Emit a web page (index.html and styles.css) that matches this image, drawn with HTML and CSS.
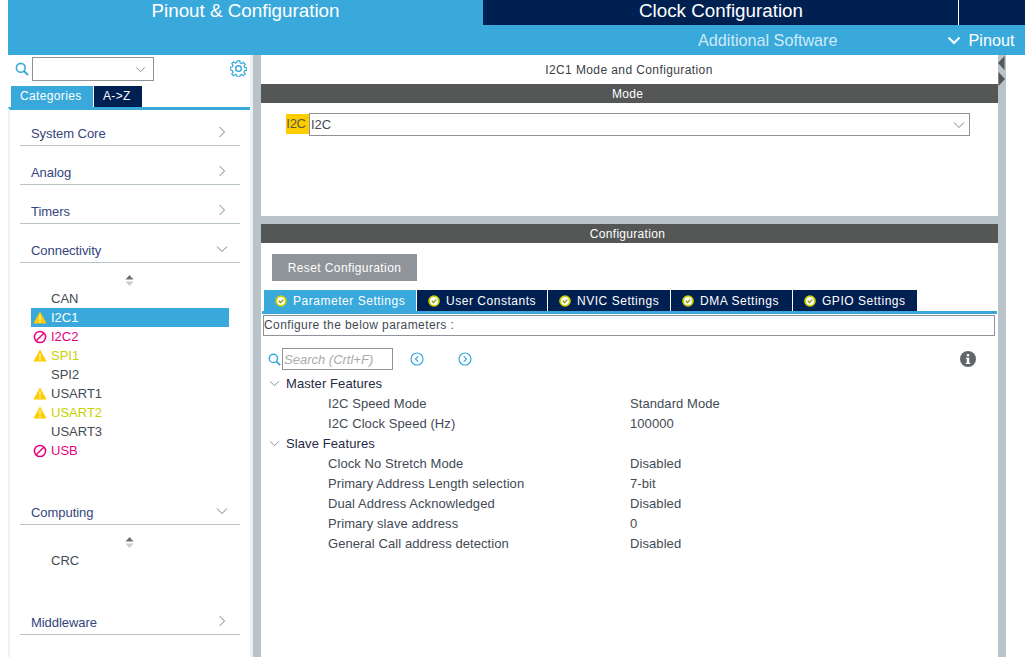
FILE: index.html
```html
<!DOCTYPE html>
<html lang="en">
<head>
<meta charset="utf-8">
<title>Pinout &amp; Configuration</title>
<link rel="stylesheet" href="styles.css">
</head>
<body>
<svg width="0" height="0" class="defs">
  <defs>
    <symbol id="warn" viewBox="0 0 14 13"><path d="M7 .5 13.6 12.500H.4Z" fill="#ffcc00"/><path d="M6.400 4.200h1.200l-.2 5H6.600ZM6.400 10h1.200v1.200H6.400Z" fill="#fff"/></symbol>
    <symbol id="ban" viewBox="0 0 14 14"><circle cx="7" cy="7" r="5.600" fill="none" stroke="#e6007e" stroke-width="1.500"/><path d="M3 11 11 3" stroke="#e6007e" stroke-width="1.500"/></symbol>
    <symbol id="ok" viewBox="0 0 12 12"><circle cx="6" cy="6" r="5.800" fill="#c8d200"/><circle cx="6" cy="6" r="3.900" fill="#fff"/><path d="M3.800 5.800 5.500 7.600 8.300 4.600" fill="none" stroke="#8a9200" stroke-width="1.300"/></symbol>
    <symbol id="right" viewBox="0 0 8 12"><path d="M1.500 1 6.500 6 1.500 11" fill="none" stroke="#7b7f84" stroke-width="1"/></symbol>
    <symbol id="down" viewBox="0 0 12 8"><path d="M1 1.500 6 6.500 11 1.500" fill="none" stroke="#7b7f84" stroke-width="1"/></symbol>
    <symbol id="search" viewBox="0 0 14 14"><circle cx="5.800" cy="5.800" r="4.400" fill="none" stroke="#39a9dc" stroke-width="1.600"/><path d="M9 9 13 13" stroke="#39a9dc" stroke-width="2"/></symbol>
    <symbol id="sort" viewBox="0 0 9 11"><path d="M4.500 0 8.500 4.500H.5Z" fill="#6d7073"/><path d="M4.500 11 .5 6.500H8.500Z" fill="#c9cccf"/></symbol>
  </defs>
</svg>
<div class="app">
  <header class="header">
    <div class="main-tabs">
      <div class="main-tab main-tab-active">Pinout &amp; Configuration</div>
      <div class="main-tab">Clock Configuration</div>
      <div class="main-tab main-tab-end"></div>
    </div>
    <div class="sub-bar">
      <span class="sub-software">Additional Software</span>
      <span class="sub-pinout">
        <svg class="pinout-chevron" viewBox="0 0 14 9" width="14" height="9"><path d="M1.500 1.500 7 7 12.500 1.500" fill="none" stroke="#fff" stroke-width="2"/></svg>
        Pinout
      </span>
    </div>
  </header>
  <div class="workspace">
    <aside class="sidebar">
      <div class="side-tools">
        <svg class="side-search" width="14" height="14"><use href="#search"/></svg>
        <div class="side-select">
          <svg width="11" height="7"><use href="#down"/></svg>
        </div>
        <svg class="gear" viewBox="0 0 18 18" width="17" height="17">
          <path d="M7.600 1h2.800l.4 2.200 1.500.6 1.800-1.300 2 2-1.300 1.800.6 1.500 2.100.4v2.800l-2.100.4-.6 1.500 1.300 1.800-2 2-1.800-1.300-1.500.6-.4 2.100H7.600l-.4-2.100-1.500-.6-1.800 1.300-2-2 1.300-1.800-.6-1.500L.500 10.400V7.600l2.100-.4.600-1.500-1.300-1.800 2-2 1.800 1.300 1.500-.6Z" fill="none" stroke="#39a9dc" stroke-width="1.300"/>
          <circle cx="9" cy="9" r="3" fill="none" stroke="#39a9dc" stroke-width="1.500"/>
        </svg>
      </div>
      <div class="side-tabs">
        <div class="side-tab side-tab-active">Categories</div>
        <div class="side-tab">A-&gt;Z</div>
      </div>
      <div class="side-panel">
        <div class="cat cat-first"><span>System Core</span><svg width="8" height="12"><use href="#right"/></svg></div>
        <div class="cat"><span>Analog</span><svg width="8" height="12"><use href="#right"/></svg></div>
        <div class="cat"><span>Timers</span><svg width="8" height="12"><use href="#right"/></svg></div>
        <div class="cat"><span>Connectivity</span><svg class="cat-down" width="12" height="8"><use href="#down"/></svg></div>
        <div class="sorter"><svg width="9" height="11"><use href="#sort"/></svg></div>
        <ul class="items">
          <li class="item"><span class="item-icon"></span>CAN</li>
          <li class="item item-selected"><span class="item-icon"><svg width="14" height="13"><use href="#warn"/></svg></span>I2C1</li>
          <li class="item item-pink"><span class="item-icon"><svg width="14" height="14"><use href="#ban"/></svg></span>I2C2</li>
          <li class="item item-lime"><span class="item-icon"><svg width="14" height="13"><use href="#warn"/></svg></span>SPI1</li>
          <li class="item"><span class="item-icon"></span>SPI2</li>
          <li class="item"><span class="item-icon"><svg width="14" height="13"><use href="#warn"/></svg></span>USART1</li>
          <li class="item item-lime"><span class="item-icon"><svg width="14" height="13"><use href="#warn"/></svg></span>USART2</li>
          <li class="item"><span class="item-icon"></span>USART3</li>
          <li class="item item-pink"><span class="item-icon"><svg width="14" height="14"><use href="#ban"/></svg></span>USB</li>
        </ul>
        <div class="cat cat-computing"><span>Computing</span><svg class="cat-down" width="12" height="8"><use href="#down"/></svg></div>
        <div class="sorter"><svg width="9" height="11"><use href="#sort"/></svg></div>
        <ul class="items">
          <li class="item"><span class="item-icon"></span>CRC</li>
        </ul>
        <div class="cat cat-middleware"><span>Middleware</span><svg width="8" height="12"><use href="#right"/></svg></div>
      </div>
    </aside>
    <main class="main">
      <section class="mode">
        <div class="mode-title">I2C1 Mode and Configuration</div>
        <div class="bar">Mode</div>
        <div class="mode-row">
          <span class="mode-label">I2C</span>
          <div class="mode-select"><span>I2C</span><svg width="12" height="8"><use href="#down"/></svg></div>
        </div>
      </section>
      <section class="config">
        <div class="bar">Configuration</div>
        <button class="reset" type="button">Reset Configuration</button>
        <div class="cfg-tabs">
          <div class="cfg-tab cfg-tab-active"><svg width="12" height="12"><use href="#ok"/></svg>Parameter Settings</div>
          <div class="cfg-tab"><svg width="12" height="12"><use href="#ok"/></svg>User Constants</div>
          <div class="cfg-tab"><svg width="12" height="12"><use href="#ok"/></svg>NVIC Settings</div>
          <div class="cfg-tab"><svg width="12" height="12"><use href="#ok"/></svg>DMA Settings</div>
          <div class="cfg-tab"><svg width="12" height="12"><use href="#ok"/></svg>GPIO Settings</div>
        </div>
        <div class="cfg-hint">Configure the below parameters :</div>
        <div class="search-row">
          <svg width="13" height="13"><use href="#search"/></svg>
          <div class="search-box">Search (Crtl+F)</div>
          <svg class="nav-prev" viewBox="0 0 14 14" width="14" height="14"><circle cx="7" cy="7" r="6" fill="none" stroke="#39a9dc" stroke-width="1.200"/><path d="M8.200 4.300 5.500 7l2.700 2.700" fill="none" stroke="#39a9dc" stroke-width="1.200"/></svg>
          <svg class="nav-next" viewBox="0 0 14 14" width="14" height="14"><circle cx="7" cy="7" r="6" fill="none" stroke="#39a9dc" stroke-width="1.200"/><path d="M5.800 4.300 8.500 7 5.800 9.700" fill="none" stroke="#39a9dc" stroke-width="1.200"/></svg>
          <svg class="info" viewBox="0 0 16 16" width="16" height="16"><circle cx="8" cy="8" r="8" fill="#636669"/><rect x="6.800" y="3" width="2.400" height="2.400" fill="#fff"/><path d="M6 6.800h3.200v5H10.200v1.200H5.800v-1.200h1v-3.800H6Z" fill="#fff"/></svg>
        </div>
        <div class="params">
          <div class="group"><svg width="11" height="7"><use href="#down"/></svg>Master Features</div>
          <div class="param"><span class="param-name">I2C Speed Mode</span><span>Standard Mode</span></div>
          <div class="param"><span class="param-name">I2C Clock Speed (Hz)</span><span>100000</span></div>
          <div class="group"><svg width="11" height="7"><use href="#down"/></svg>Slave Features</div>
          <div class="param"><span class="param-name">Clock No Stretch Mode</span><span>Disabled</span></div>
          <div class="param"><span class="param-name">Primary Address Length selection</span><span>7-bit</span></div>
          <div class="param"><span class="param-name">Dual Address Acknowledged</span><span>Disabled</span></div>
          <div class="param"><span class="param-name">Primary slave address</span><span>0</span></div>
          <div class="param"><span class="param-name">General Call address detection</span><span>Disabled</span></div>
        </div>
      </section>
    </main>
    <div class="splitter">
      <svg class="split-arrow" width="7" height="14" viewBox="0 0 7 14"><path d="M6.500 0V14L0 7Z" fill="#555756"/></svg>
      <svg class="split-arrow" width="7" height="14" viewBox="0 0 7 14"><path d="M.5 0V14L7 7Z" fill="#555756"/></svg>
    </div>
  </div>
</div>
</body>
</html>
```
FILE: styles.css
```css
* { box-sizing: border-box; }
html, body { margin: 0; height: 657px; overflow: hidden; background: #fff; }
body { font-family: "Liberation Sans", Arial, sans-serif; font-size: 13px; color: #434a54; }
.defs { position: absolute; }
svg { display: block; flex: none; }

.app { padding-left: 8px; height: 657px; display: flex; flex-direction: column; }

.header { flex: none; height: 55px; color: #fff; }
.main-tabs { display: flex; height: 25px; background: #002052; }
.main-tab { width: 475px; border-right: 1px solid #fff; margin-right: 1px; font-size: 18.800px; line-height: 22px; text-align: center; }
.main-tab + .main-tab { width: 475px; margin-right: 0; }
.main-tab-active { background: #39a9dc; border-right: 0; margin-right: 1px; }
.main-tab-end { border: 0; flex: 1; }
.sub-bar { height: 30px; background: #39a9dc; display: flex; align-items: center; font-size: 16.200px; }
.sub-software { margin-left: 690px; color: #cfe9f6; }
.sub-pinout { margin-left: 110px; display: flex; align-items: center; gap: 7px; }

.workspace { flex: 1; display: flex; min-height: 0; }

.sidebar { width: 245px; flex: none; display: flex; flex-direction: column; background: #fff; border-right: 3px solid #eef0f1; }
.side-tools { height: 31px; display: flex; align-items: flex-start; padding: 2px 0 0 7px; flex: none; }
.side-search { margin-top: 5px; }
.side-select { width: 122px; height: 24px; margin-left: 3px; border: 1px solid #8f9295; display: flex; align-items: center; justify-content: flex-end; padding-right: 7px; }
.gear { margin: 3px 0 0 76px; }
.side-tabs { display: flex; height: 21px; padding-left: 3px; gap: 1px; flex: none; }
.side-tab { background: #002052; color: #fff; padding: 0 9px; line-height: 21px; font-size: 12px; letter-spacing: .35px; white-space: nowrap; }
.side-tab-active { background: #39a9dc; width: 82px; }
.side-tab + .side-tab { width: 48px; }
.side-panel { flex: 1; border-top: 3px solid #39a9dc; border-left: 2px solid #eef0f1; padding: 0 10px; width: 242px; }
.cat { height: 39px; border-bottom: 1px solid #b8c3ca; display: flex; align-items: flex-end; justify-content: space-between; padding: 0 14px 3px 11px; color: #34447c; font-size: 13px; line-height: 16px; letter-spacing: -.05px; }
.cat svg { margin-bottom: 4px; }
.cat .cat-down { margin-bottom: 6px; margin-right: -2px; }
.cat-first { height: 36px; }
.sorter { height: 26px; padding: 12px 0 0 105px; }
.items { list-style: none; margin: 0 0 0 11px; padding: 0; width: 198px; }
.item { height: 19px; display: flex; align-items: center; line-height: 19px; font-size: 13px; color: #434a54; }
.item-icon { width: 20px; flex: none; padding-left: 2px; }
.item-selected { background: #39a9dc; color: #fff; }
.item-pink { color: #e6007e; }
.item-lime { color: #c8d200; }
.cat-computing { margin-top: 26px; height: 39px; }
.cat-middleware { margin-top: 25px; height: 40px; }

.main { flex: none; background: #b8c3ca; border-left: 8px solid #b8c3ca; width: 745px; display: flex; flex-direction: column; gap: 8px; }
.mode { height: 161px; background: #fff; flex: none; }
.mode-title { height: 29px; line-height: 30px; text-align: center; font-size: 12px; letter-spacing: .4px; color: #3c4044; padding-right: 1px; }
.bar { height: 19px; line-height: 20px; background: #555756; color: #fff; text-align: center; font-size: 12px; letter-spacing: .3px; padding-right: 4px; }
.mode-row { display: flex; margin: 10px 0 0 25px; align-items: stretch; }
.mode-label { width: 23px; height: 20px; background: #ffcc00; line-height: 20px; padding-right: 3px; text-align: center; color: #5a5a40; font-size: 13px; letter-spacing: -.3px; margin-top: 1px; }
.mode-select { width: 661px; height: 23px; border: 1px solid #8f9295; display: flex; align-items: center; justify-content: space-between; padding: 0 4px 0 1px; font-size: 13px; }

.config { flex: 1; background: #fff; min-height: 0; }
.reset { display: block; margin: 11px 0 0 11px; width: 145px; height: 27px; border: 0; background: #8e9499; color: #fff; font: 12px "Liberation Sans", Arial, sans-serif; letter-spacing: .4px; padding: 0; }
.cfg-tabs { display: flex; margin: 9px 0 0 1px; padding-left: 2px; height: 24px; gap: 1px; width: 735px; border-bottom: 3px solid #39a9dc; }
.cfg-tab { background: #002052; color: #fff; height: 21px; display: flex; align-items: center; gap: 6px; font-size: 12px; letter-spacing: .53px; padding-left: 11px; white-space: nowrap; }
.cfg-tab:nth-child(1) { width: 152px; background: #39a9dc; }
.cfg-tab:nth-child(2) { width: 130px; }
.cfg-tab:nth-child(3) { width: 122px; }
.cfg-tab:nth-child(4) { width: 121px; }
.cfg-tab:nth-child(5) { width: 124px; }
.cfg-hint { margin: 1px 0 0 2px; width: 732px; height: 21px; border: 1px solid #8e9499; line-height: 19px; font-size: 12px; letter-spacing: .4px; padding-left: 0; color: #434a54; }
.search-row { display: flex; align-items: center; margin: 12px 0 0 7px; height: 22px; }
.search-box { width: 111px; height: 22px; margin-left: 1px; border: 1px solid #8e9499; font-style: italic; color: #a8abae; line-height: 21px; padding-left: 1px; font-size: 13px; }
.nav-prev { margin-left: 17px; }
.nav-next { margin-left: 34px; }
.info { margin-left: 488px; }
.params { margin-top: 3px; }
.group { height: 20px; display: flex; align-items: center; color: #1f2a44; font-size: 13px; padding-left: 8px; gap: 6px; letter-spacing: .1px; }
.param { height: 20px; display: flex; align-items: center; font-size: 13px; letter-spacing: .08px; color: #434a54; padding-left: 67px; }
.param-name { width: 302px; flex: none; }

.splitter { width: 8px; flex: none; background: #b8c3ca; display: flex; flex-direction: column; gap: 2px; padding-top: 1px; }
```
